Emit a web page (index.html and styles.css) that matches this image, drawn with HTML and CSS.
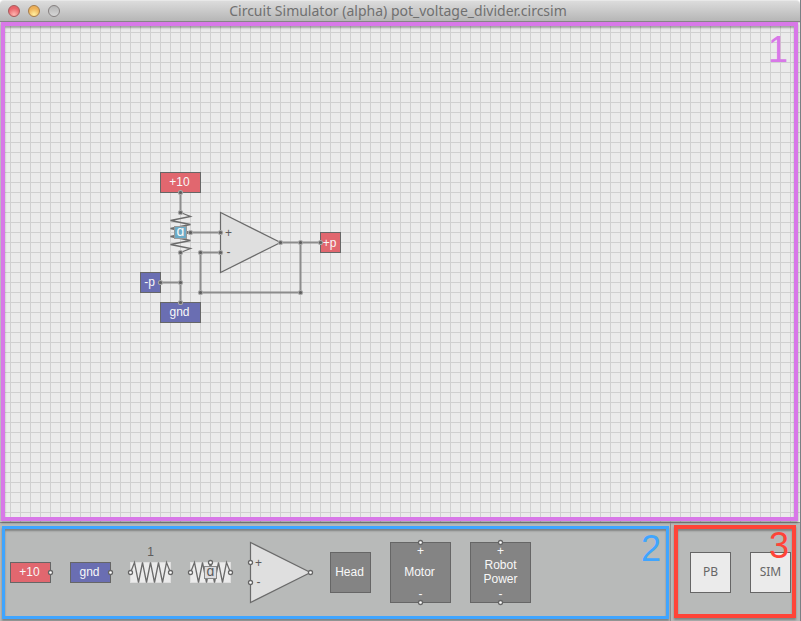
FILE: index.html
```html
<!DOCTYPE html>
<html lang="en">
<head>
<meta charset="utf-8">
<title>Circuit Simulator (alpha)</title>
<link rel="stylesheet" href="styles.css">
</head>
<body>
<div class="window">
  <header class="titlebar">
    <div class="lights">
      <button class="light close" aria-label="Close"></button>
      <button class="light minimize" aria-label="Minimize"></button>
      <button class="light zoom" aria-label="Zoom"></button>
    </div>
    <h1 class="title">Circuit Simulator (alpha) pot_voltage_divider.circsim</h1>
  </header>

  <main class="board">
    <svg class="circuit" width="360" height="320" aria-label="Circuit">
      <defs>
        <g id="joint"><circle r="2.6" class="joint-ring"/><circle r="1.6" class="joint-core"/></g>
        <g id="port"><circle r="2" class="port"/></g>
      </defs>
      <g transform="translate(.5 .5)">
        <polygon class="amp" points="220,190 220,250 280,220"/>
        <path class="wire" d="M180 170V190M190 210H220M220 230H200V270H300V220M280 220H320M180 230V280M160 260H180"/>
        <path class="coil" d="M180 190L190 194L170 198L190 202L170 206L190 210L170 214L190 218L170 222L190 226L180 230"/>
        <rect class="red" x="160" y="150" width="40" height="20"/>
        <rect class="blue" x="160" y="280" width="40" height="20"/>
        <rect class="blue" x="140" y="250" width="20" height="20"/>
        <rect class="red" x="320" y="210" width="20" height="20"/>
        <rect class="knob" x="174" y="204" width="12" height="12"/>
        <g class="label light-text">
          <text x="179" y="163">+10</text>
          <text x="179" y="293">gnd</text>
          <text x="149" y="263">-p</text>
          <text x="329" y="224">+p</text>
          <text class="alpha" x="180" y="213">ɑ</text>
        </g>
        <g class="label">
          <text x="228" y="214">+</text>
          <text x="228" y="233">-</text>
        </g>
        <use href="#joint" x="180" y="170"/><use href="#joint" x="180" y="190"/>
        <use href="#joint" x="190" y="210"/><use href="#joint" x="220" y="210"/>
        <use href="#joint" x="220" y="230"/><use href="#joint" x="200" y="230"/>
        <use href="#joint" x="200" y="270"/><use href="#joint" x="300" y="270"/>
        <use href="#joint" x="300" y="220"/><use href="#joint" x="280" y="220"/>
        <use href="#joint" x="320" y="220"/><use href="#joint" x="180" y="230"/>
        <use href="#joint" x="180" y="260"/><use href="#joint" x="160" y="260"/>
        <use href="#joint" x="180" y="280"/>
      </g>
    </svg>
    <div class="frame frame-board"></div>
    <span class="mark mark-board">1</span>
  </main>

  <footer class="dock">
    <section class="palette" aria-label="Parts">
      <button class="part" aria-label="Power">
        <svg width="41" height="21"><g transform="translate(.5 .5)"><rect class="red" width="40" height="20"/><text class="label light-text" x="19" y="13">+10</text><use href="#port" x="40" y="10"/></g></svg>
      </button>
      <button class="part" aria-label="Ground">
        <svg width="41" height="21"><g transform="translate(.5 .5)"><rect class="blue" width="40" height="20"/><text class="label light-text" x="19" y="13">gnd</text><use href="#port" x="40" y="10"/></g></svg>
      </button>
      <button class="part" aria-label="Resistor">
        <svg width="41" height="21"><g transform="translate(.5 .5)"><rect class="pad" width="40" height="20"/><path class="coil" d="M0 10L4 0L8 20L12 0L16 20L20 0L24 20L28 0L32 20L36 0L40 10"/><text class="label" x="20" y="-7">1</text><use href="#port" x="0" y="10"/><use href="#port" x="40" y="10"/></g></svg>
      </button>
      <button class="part" aria-label="Potentiometer">
        <svg width="41" height="21"><g transform="translate(.5 .5)"><rect class="pad" width="40" height="20"/><path class="coil" d="M0 10L4 0L8 20L12 0L16 20L20 0L24 20L28 0L32 20L36 0L40 10"/><rect class="knob-idle" x="14" y="4" width="12" height="12"/><text class="label alpha" x="20" y="13">ɑ</text><use href="#port" x="0" y="10"/><use href="#port" x="40" y="10"/><use href="#port" x="20" y="0"/></g></svg>
      </button>
      <button class="part" aria-label="Op amp">
        <svg width="61" height="61"><g transform="translate(.5 .5)"><polygon class="amp" points="0,0 0,60 60,30"/><g class="label"><text x="8" y="24">+</text><text x="8" y="43">-</text></g><use href="#port" x="0" y="20"/><use href="#port" x="0" y="40"/><use href="#port" x="60" y="30"/></g></svg>
      </button>
      <button class="part" aria-label="Head">
        <svg width="41" height="41"><g transform="translate(.5 .5)"><rect class="gray" width="40" height="40"/><text class="label light-text" x="19" y="23">Head</text></g></svg>
      </button>
      <button class="part" aria-label="Motor">
        <svg width="61" height="61"><g transform="translate(.5 .5)"><rect class="gray" width="60" height="60"/><g class="label light-text"><text x="30" y="12">+</text><text x="29" y="33">Motor</text><text x="30" y="55">-</text></g><use href="#port" x="30" y="0"/><use href="#port" x="30" y="60"/></g></svg>
      </button>
      <button class="part" aria-label="Robot power">
        <svg width="61" height="61"><g transform="translate(.5 .5)"><rect class="gray" width="60" height="60"/><g class="label light-text"><text x="30" y="12">+</text><text x="30" y="26">Robot</text><text x="30" y="40">Power</text><text x="30" y="55">-</text></g><use href="#port" x="30" y="0"/><use href="#port" x="30" y="60"/></g></svg>
      </button>
      <div class="frame frame-palette"></div>
      <span class="mark mark-palette">2</span>
    </section>
    <section class="tools" aria-label="Tools">
      <button class="tool">PB</button>
      <button class="tool">SIM</button>
      <div class="frame frame-tools"></div>
      <span class="mark mark-tools">3</span>
    </section>
  </footer>
</div>
</body>
</html>
```

FILE: styles.css
```css
* { box-sizing: border-box; }

body {
  margin: 0;
  font-family: "Liberation Sans", Arial, sans-serif;
  font-size: 12px;
  color: #666;
}

button {
  padding: 0;
  border: 0;
  background: none;
  color: inherit;
}

.window {
  display: flex;
  flex-direction: column;
  height: 100vh;
  border-right: 1px solid #7b7f84;
  overflow: hidden;
}

/* Title bar */
.titlebar {
  display: grid;
  grid-template-columns: 60px 1fr 60px;
  align-items: center;
  height: 22px;
  padding: 0 12px 0 8px;
  border-top: 1px solid #e8e8e8;
  border-bottom: 1px solid #858585;
  border-radius: 4px 4px 0 0;
  background: linear-gradient(#dcdcdc, #b6b6b6);
}

.lights { display: flex; gap: 8px; }

.light {
  width: 12px;
  height: 12px;
  border: 1px solid #858080;
  border-radius: 50%;
}

.close { background: radial-gradient(circle at 50% 85%, #ffb5b0, #e8636a 65%); border-color: #a8585a; }
.minimize { background: radial-gradient(circle at 50% 85%, #fff0a0, #edb058 65%); border-color: #a67c48; }
.zoom { background: linear-gradient(#b5b5b5, #d6d6d6); }

.title {
  margin: 0;
  font: 400 14px/20px "Noto Sans", sans-serif;
  text-align: center;
  white-space: nowrap;
  color: #707070;
}

/* Board */
.board {
  position: relative;
  flex: 1;
  min-height: 0;
  background-color: #ebebeb;
  background-image:
    linear-gradient(to right, #d0d0d0 1px, transparent 1px),
    linear-gradient(to bottom, #d0d0d0 1px, transparent 1px);
  background-size: 10px 10px;
}

svg { display: block; overflow: visible; }

.label {
  fill: #5c5c5c;
  font-size: 12px;
  text-anchor: middle;
}
.light-text, .light-text text { fill: #f8f8f8; }
.alpha { font-size: 14px; }

.wire { fill: none; stroke: #8c8c8c; stroke-width: 2; }
.coil { fill: none; stroke: #6b6b6b; stroke-width: 1.3; }
.amp { fill: #dfdfdf; stroke: #6b6b6b; stroke-width: 1.2; }
.red { fill: #e1676f; stroke: #666; }
.blue { fill: #6a6eb2; stroke: #666; }
.gray { fill: #848484; stroke: #666; }
.pad { fill: #ebebeb; stroke: #dedede; }
.knob { fill: #6baac6; stroke: #999; }
.knob-idle { fill: #dcdcdf; stroke: #888; }
.joint-ring { fill: #a8a8a8; }
.joint-core { fill: #5e5e5e; }
.port { fill: #fff; stroke: #666; stroke-width: 1.3; }

/* Dock */
.dock {
  display: flex;
  height: 99px;
  border-top: 1px solid #8e8e8e;
  background: #b8bab9;
}

.palette, .tools {
  position: relative;
  display: flex;
  align-items: center;
  gap: 19px;
}

.palette { flex: 1; padding-left: 10px; }

.tools {
  padding: 0 9px 0 19px;
  border-left: 1px solid #8e8e8e;
}

.tool {
  width: 41px;
  height: 41px;
  border: 1px solid #666;
  background: #ebebeb;
  font: 400 12px/16px "Noto Sans", sans-serif;
}

/* Region outlines with their numbers */
.frame {
  position: absolute;
  pointer-events: none;
  border: 4px solid;
  box-shadow: 0 2px 2px rgb(0 0 0 / 30%), inset 0 2px 2px rgb(0 0 0 / 30%);
}
.frame-board { inset: 0 2px 1px 1px; border-color: #d878e8; }
.frame-palette { inset: 3px 1px 2px 2px; border-color: #3fa5ff; border-width: 3px; }
.frame-tools { inset: 2px 4px 3px 3px; border-color: #ff4438; }

.mark {
  position: absolute;
  font: 36px/36px "Liberation Sans", Arial, sans-serif;
  pointer-events: none;
}
.mark-board { top: 10px; right: 12px; color: #d878e8; }
.mark-palette { top: 8px; right: 9px; color: #3fa5ff; }
.mark-tools { top: 5px; right: 11px; color: #ff4438; }
```
